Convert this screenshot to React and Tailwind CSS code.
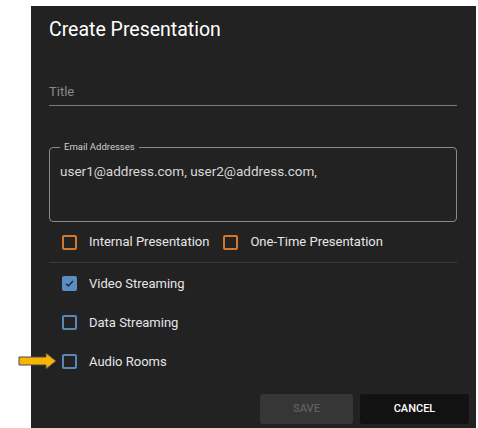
import React, { useState } from "react";

const Box = ({ checked, color, onClick }) => {
  if (checked) {
    return (
      <button
        onClick={onClick}
        className="w-[15px] h-[15px] rounded-[2px] bg-[#5b8dc4] flex items-center justify-center shrink-0"
      >
        <svg width="11" height="11" viewBox="0 0 12 12" fill="none">
          <path d="M2.2 6.2 L4.8 8.7 L9.8 3.4" stroke="#1f2a36" strokeWidth="1.6" />
        </svg>
      </button>
    );
  }
  return (
    <button
      onClick={onClick}
      className={`w-[15px] h-[15px] rounded-[2px] border-2 shrink-0 ${
        color === "orange" ? "border-[#d2772e]" : "border-[#5a87b8]"
      }`}
    />
  );
};

const Row = ({ label, checked, onToggle }) => (
  <div className="flex items-center h-[39px] pl-[13px]">
    <Box checked={checked} onClick={onToggle} />
    <span className="ml-[12px] text-[13px] text-[#e6e6e6]">{label}</span>
  </div>
);

const App = () => {
  const [opts, setOpts] = useState({ video: true, data: false, audio: false });
  const [internal, setInternal] = useState(false);
  const [oneTime, setOneTime] = useState(false);

  const toggle = (k) => setOpts({ ...opts, [k]: !opts[k] });

  return (
    <div
      className="relative w-[478px] h-[428px] bg-white overflow-hidden"
      style={{ fontFamily: "Roboto, 'Liberation Sans', sans-serif" }}
    >
      <div className="ml-[31px] mt-[6px] w-[445px] h-[422px] bg-[#222222] pl-[18px] pr-[19px] pt-[12px]">
        <h2 className="text-[19.5px] text-white leading-[24px]">Create Presentation</h2>

        <div className="mt-[37px] border-b border-[#7a7a7a] pb-[2px]">
          <span className="text-[13px] text-[#8a8a8a]">Title</span>
        </div>

        <div className="relative mt-[41px] h-[75px] border border-[#8a8a8a] rounded-[4px] px-[10px] pt-[13px]">
          <span className="absolute -top-[7px] left-[10px] bg-[#222222] px-[4px] text-[9.5px] leading-[12px] text-[#d0d0d0]">
            Email Addresses
          </span>
          <div className="text-[13.5px] text-[#d8d8d8]">user1@address.com, user2@address.com,</div>
        </div>

        <div className="flex items-center h-[41px] pl-[13px] border-b border-[#3a3a3a]">
          <Box color="orange" checked={internal} onClick={() => setInternal(!internal)} />
          <span className="ml-[12px] text-[13px] text-[#e6e6e6]">Internal Presentation</span>
          <span className="ml-[14px]" />
          <Box color="orange" checked={oneTime} onClick={() => setOneTime(!oneTime)} />
          <span className="ml-[12px] text-[13px] text-[#e6e6e6]">One-Time Presentation</span>
        </div>

        <div className="pt-[1px]">
          <Row label="Video Streaming" checked={opts.video} onToggle={() => toggle("video")} />
          <Row label="Data Streaming" checked={opts.data} onToggle={() => toggle("data")} />
          <Row label="Audio Rooms" checked={opts.audio} onToggle={() => toggle("audio")} />
        </div>

        <div className="flex justify-end gap-[7px] mt-[13px] -mr-[12px]">
          <button className="w-[93px] h-[30px] rounded-[3px] bg-[#363636] text-[11px] font-medium text-[#5f5f5f]">
            SAVE
          </button>
          <button className="w-[109px] h-[30px] rounded-[3px] bg-[#121212] text-[11px] font-medium text-white">
            CANCEL
          </button>
        </div>
      </div>

      <svg className="absolute left-[18px] top-[352px]" width="40" height="18" viewBox="0 0 40 18">
        <path
          d="M1 5 L28 5 L28 1 L38 9 L28 17 L28 13 L1 13 Z"
          fill="#f7b500"
          stroke="#4a4a4a"
          strokeWidth="1"
          strokeLinejoin="miter"
        />
      </svg>
    </div>
  );
};

export default App;
